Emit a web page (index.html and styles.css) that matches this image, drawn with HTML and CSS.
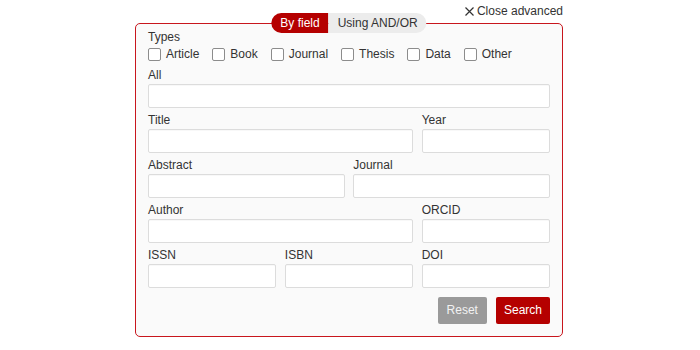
FILE: index.html
```html
<!DOCTYPE html>
<html lang="en">
<head>
<meta charset="utf-8">
<title>Advanced search</title>
<link rel="stylesheet" href="styles.css">
</head>
<body>
<div class="wrap">
  <div class="topbar">
    <a class="close" href="#">
      <svg class="close-icon" width="9" height="9" viewBox="0 0 9 9" aria-hidden="true"><path d="M0.5 0.5 L8.5 8.5 M8.5 0.5 L0.5 8.5" stroke="#333" stroke-width="1.2" fill="none"/></svg>
      <span>Close advanced</span>
    </a>
  </div>
  <form class="panel">
    <div class="tabs">
      <span class="tab active">By field</span>
      <span class="tab">Using AND/OR</span>
    </div>
    <div class="label">Types</div>
    <div class="types">
      <label class="type"><input type="checkbox" class="cb"><span>Article</span></label>
      <label class="type"><input type="checkbox" class="cb"><span>Book</span></label>
      <label class="type"><input type="checkbox" class="cb"><span>Journal</span></label>
      <label class="type"><input type="checkbox" class="cb"><span>Thesis</span></label>
      <label class="type"><input type="checkbox" class="cb"><span>Data</span></label>
      <label class="type"><input type="checkbox" class="cb"><span>Other</span></label>
    </div>
    <div class="fields">
      <div class="field span6"><div class="label">All</div><input class="text" type="text"></div>
      <div class="field span4"><div class="label">Title</div><input class="text" type="text"></div>
      <div class="field span2"><div class="label">Year</div><input class="text" type="text"></div>
      <div class="field span3"><div class="label">Abstract</div><input class="text" type="text"></div>
      <div class="field span3"><div class="label">Journal</div><input class="text" type="text"></div>
      <div class="field span4"><div class="label">Author</div><input class="text" type="text"></div>
      <div class="field span2"><div class="label">ORCID</div><input class="text" type="text"></div>
      <div class="field span2"><div class="label">ISSN</div><input class="text" type="text"></div>
      <div class="field span2"><div class="label">ISBN</div><input class="text" type="text"></div>
      <div class="field span2"><div class="label">DOI</div><input class="text" type="text"></div>
    </div>
    <div class="actions">
      <button type="button" class="btn reset">Reset</button>
      <button type="button" class="btn search">Search</button>
    </div>
  </form>
</div>
</body>
</html>
```
FILE: styles.css
```css
* { box-sizing: border-box; }
html, body { margin: 0; padding: 0; background: #fff; }
body {
  font-family: "Liberation Sans", Arial, Helvetica, sans-serif;
  font-size: 12px;
  color: #333;
}
.wrap {
  width: 428px;
  margin-left: 135px;
}
.topbar {
  height: 23px;
  display: flex;
  justify-content: flex-end;
  align-items: flex-start;
  padding-top: 4px;
}
.close {
  display: flex;
  align-items: center;
  gap: 3px;
  line-height: 15px;
  color: #333;
  text-decoration: none;
}
.close-icon { display: block; }
.panel {
  position: relative;
  border: 1px solid #c8161d;
  border-radius: 5px;
  background: #fafafa;
  padding: 6px 12px 12px;
  margin: 0;
}
.tabs {
  position: absolute;
  top: -11px;
  left: 50%;
  transform: translateX(-50%);
  display: flex;
}
.tab {
  height: 20px;
  line-height: 20px;
  padding: 0 9px;
  background: #ececec;
  color: #333;
  white-space: nowrap;
  border-radius: 0 10px 10px 0;
}
.tab.active {
  background: #b50000;
  color: #fff;
  border-radius: 10px 0 0 10px;
}
.label {
  line-height: 15px;
  color: #333;
}
.types {
  display: flex;
  gap: 13px;
  margin-top: 1px;
  height: 16px;
  align-items: center;
}
.type {
  display: flex;
  align-items: center;
  gap: 5px;
  line-height: 15px;
}
.cb {
  -webkit-appearance: none;
  appearance: none;
  width: 13px;
  height: 13px;
  margin: 0;
  border: 1px solid #8c8c8c;
  border-radius: 2px;
  background: #fff;
}
.fields {
  margin-top: 6px;
  display: grid;
  grid-template-columns: repeat(6, 1fr);
  column-gap: 8.5px;
  row-gap: 5px;
}
.span6 { grid-column: span 6; }
.span4 { grid-column: span 4; }
.span3 { grid-column: span 3; }
.span2 { grid-column: span 2; }
.field .label { margin-bottom: 1px; }
.text {
  display: block;
  width: 100%;
  height: 24px;
  margin: 0;
  border: 1px solid #dcdcdc;
  border-radius: 2px;
  background: #fff;
  box-shadow: inset 0 1px 1px rgba(0,0,0,0.03);
  font: inherit;
}
.actions {
  display: flex;
  justify-content: flex-end;
  gap: 9px;
  margin-top: 9px;
}
.btn {
  height: 27px;
  padding: 0 9px;
  border: none;
  border-radius: 2px;
  font: inherit;
  line-height: 27px;
  color: #fff;
}
.btn.reset { background: #9a9a9a; color: #f2f2f2; }
.btn.search { background: #b50000; padding: 0 8px; }
```
